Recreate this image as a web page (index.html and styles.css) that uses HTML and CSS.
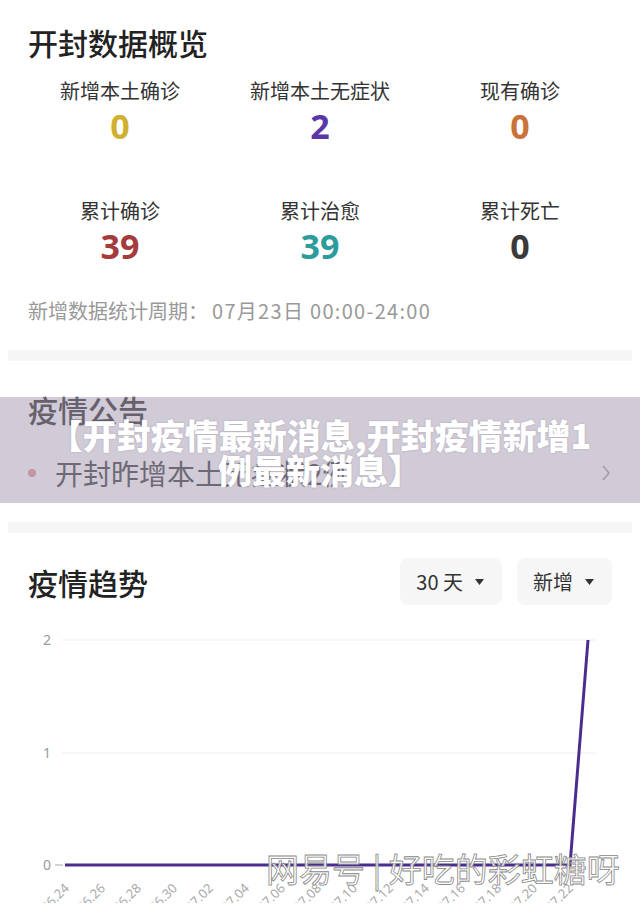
FILE: index.html
```html
<!DOCTYPE html>
<html lang="zh-CN">
<head>
    <meta charset="UTF-8">
    <meta name="viewport" content="width=device-width, initial-scale=1.0">
    <title>开封疫情最新消息</title>
    <link rel="stylesheet" href="styles.css">
</head>
<body>

    <!-- 数据概览 -->
    <section class="overview">
        <h2 class="title">开封数据概览</h2>
        <div class="stats">
            <div class="stat"><span class="stat-label">新增本土确诊</span><span class="stat-num yellow">0</span></div>
            <div class="stat"><span class="stat-label">新增本土无症状</span><span class="stat-num purple">2</span></div>
            <div class="stat"><span class="stat-label">现有确诊</span><span class="stat-num orange">0</span></div>
            <div class="stat"><span class="stat-label">累计确诊</span><span class="stat-num red">39</span></div>
            <div class="stat"><span class="stat-label">累计治愈</span><span class="stat-num teal">39</span></div>
            <div class="stat"><span class="stat-label">累计死亡</span><span class="stat-num dark">0</span></div>
        </div>
        <p class="period">新增数据统计周期：<span class="period-date">07月23日 00:00-24:00</span></p>
    </section>

    <div class="divider"></div>

    <!-- 疫情公告 -->
    <section class="notice">
        <h2 class="title">疫情公告</h2>
        <div class="notice-row">
            <span class="dot"></span>
            <span class="notice-text">开封昨增本土无症状2例</span>
            <svg class="chevron" width="10" height="18" viewBox="0 0 10 18"><polyline points="2,2 8,9 2,16" fill="none" stroke="#9a9a9a" stroke-width="1.5"/></svg>
        </div>
        <div class="banner">【开封疫情最新消息,开封疫情新增1<br>例最新消息】</div>
    </section>

    <div class="divider"></div>

    <!-- 疫情趋势 -->
    <section class="trend">
        <div class="trend-head">
            <h2 class="title">疫情趋势</h2>
            <div class="filters">
                <div class="filter">30 天 <svg width="9" height="6" viewBox="0 0 9 6"><polygon points="0,0 9,0 4.5,6" fill="#333"/></svg></div>
                <div class="filter">新增 <svg width="9" height="6" viewBox="0 0 9 6"><polygon points="0,0 9,0 4.5,6" fill="#333"/></svg></div>
            </div>
        </div>
        <div class="chart">
            <svg width="640" height="298" viewBox="0 0 640 298">
                <g class="grid">
                    <line x1="62" y1="35" x2="596" y2="35"/>
                    <line x1="62" y1="148" x2="596" y2="148"/>
                    <line x1="55" y1="260" x2="63" y2="260"/>
                </g>
                <g class="y-labels">
                    <text x="51" y="40">2</text>
                    <text x="51" y="153">1</text>
                    <text x="51" y="265">0</text>
                </g>
                <polyline class="series" points="65,260 570,260 588,35"/>
                <g class="x-labels">
                    <text transform="translate(70 284) rotate(-45)">06.24</text>
                    <text transform="translate(106 284) rotate(-45)">06.26</text>
                    <text transform="translate(142 284) rotate(-45)">06.28</text>
                    <text transform="translate(178 284) rotate(-45)">06.30</text>
                    <text transform="translate(214 284) rotate(-45)">07.02</text>
                    <text transform="translate(250 284) rotate(-45)">07.04</text>
                    <text transform="translate(286 284) rotate(-45)">07.06</text>
                    <text transform="translate(322 284) rotate(-45)">07.08</text>
                    <text transform="translate(358 284) rotate(-45)">07.10</text>
                    <text transform="translate(394 284) rotate(-45)">07.12</text>
                    <text transform="translate(430 284) rotate(-45)">07.14</text>
                    <text transform="translate(466 284) rotate(-45)">07.16</text>
                    <text transform="translate(502 284) rotate(-45)">07.18</text>
                    <text transform="translate(538 284) rotate(-45)">07.20</text>
                    <text transform="translate(574 284) rotate(-45)">07.22</text>
                </g>
            </svg>
            <div class="watermark">网易号 | 好吃的彩虹糖呀</div>
        </div>
    </section>

</body>
</html>
```

FILE: styles.css
```css
body {
    margin: 0;
    padding: 0;
    background: #fff;
    font-family: "Noto Sans CJK SC", "Noto Sans", sans-serif;
    color: #333;
}

.title {
    margin: 0;
    font-size: 30px;
    line-height: 36px;
    font-weight: 500;
    color: #222;
}

/* 数据概览 */
.overview {
    padding: 24px 28px 25px;
}

.stats {
    display: grid;
    grid-template-columns: repeat(3, 1fr);
    row-gap: 50px;
    margin: 17px -8px 0;
}

.stat {
    display: flex;
    flex-direction: column;
    align-items: center;
}

.stat-label {
    font-size: 20px;
    line-height: 28px;
    color: #333;
}

.stat-num {
    font-family: "Noto Sans", sans-serif;
    font-size: 34px;
    line-height: 42px;
    font-weight: 700;
}

.yellow { color: #cfb12f; }
.purple { color: #5a37a6; }
.orange { color: #c9733b; }
.red { color: #a63b3d; }
.teal { color: #2c9c9c; }
.dark { color: #3a3a3a; }

.period {
    margin: 30px 0 0;
    font-size: 20px;
    line-height: 28px;
    color: #999;
}

.period-date {
    margin-left: 4px;
    letter-spacing: 1.3px;
}

.divider {
    height: 11px;
    margin: 0 8px;
    background: #f6f6f6;
}

/* 疫情公告 */
.notice {
    position: relative;
    padding: 30px 28px 31px;
}

.notice-row {
    display: flex;
    align-items: center;
    margin-top: 28px;
    height: 36px;
}

.dot {
    width: 8px;
    height: 8px;
    border-radius: 50%;
    background: #e98a94;
    margin-right: 19px;
}

.notice-text {
    flex: 1;
    font-size: 28px;
    line-height: 36px;
    color: #333;
}

.chevron {
    margin-right: 1px;
}

.banner {
    position: absolute;
    left: 0;
    right: 0;
    top: 36px;
    height: 106px;
    box-sizing: border-box;
    padding-top: 20px;
    background: rgba(164, 156, 178, 0.52);
    color: #fff;
    text-align: center;
    font-size: 34px;
    line-height: 35px;
    font-weight: 900;
    text-shadow: 0 0 2px rgba(60, 50, 70, 0.25);
}

/* 疫情趋势 */
.trend {
    padding-top: 25px;
}

.trend-head {
    display: flex;
    justify-content: space-between;
    align-items: center;
    padding: 0 28px;
}

.filters {
    display: flex;
    gap: 15px;
}

.filter {
    display: flex;
    align-items: center;
    gap: 12px;
    height: 47px;
    padding: 0 18px 0 16px;
    background: #f6f6f6;
    border-radius: 8px;
    font-size: 20px;
    color: #333;
}

.chart {
    position: relative;
}

.chart svg {
    display: block;
}

.grid line {
    stroke: #eee;
    stroke-width: 1;
}

.grid line:last-child {
    stroke: #aaa;
}

.y-labels text {
    font-family: "Noto Sans", sans-serif;
    font-size: 14px;
    fill: #999;
    text-anchor: end;
}

.series {
    fill: none;
    stroke: #4b2d8f;
    stroke-width: 3;
}

.x-labels text {
    font-family: "Noto Sans", sans-serif;
    font-size: 13px;
    fill: #aaa;
    text-anchor: end;
}

.watermark {
    position: absolute;
    left: 266px;
    top: 243px;
    font-size: 33px;
    line-height: 40px;
    color: rgba(255, 255, 255, 0.9);
    -webkit-text-stroke: 0.8px #888;
    white-space: nowrap;
}
```
